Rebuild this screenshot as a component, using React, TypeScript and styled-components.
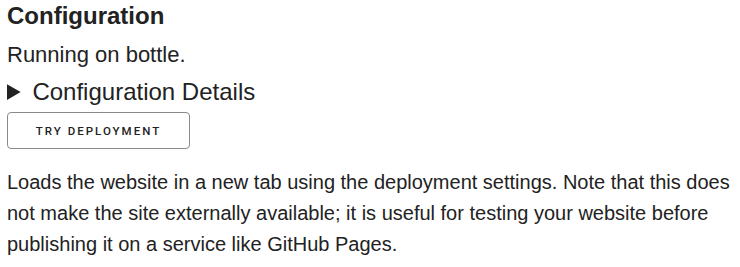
import styled, { createGlobalStyle } from "styled-components";

const GlobalStyle = createGlobalStyle`
  body {
    margin: 0;
    background: #fff;
    color: #222;
    font-family: "Liberation Sans", Arial, sans-serif;
  }
`;

const Panel = styled.section`
  padding: 2px 7px 0;
`;

const Heading = styled.h2`
  margin: 0;
  font-size: 24px;
  line-height: 28px;
  font-weight: 700;
`;

const Status = styled.p`
  margin: 12px 0 0;
  font-size: 22px;
  line-height: 26px;
`;

const Details = styled.details`
  margin-top: 10px;
  font-size: 24px;
  line-height: 28px;
`;

const Summary = styled.summary`
  cursor: pointer;
`;

const Button = styled.button`
  display: block;
  margin-top: 6px;
  width: 183px;
  height: 37px;
  padding: 0;
  background: #fff;
  border: 1px solid #8a8a8a;
  border-radius: 4px;
  color: #222;
  font-family: Roboto, "Liberation Sans", sans-serif;
  font-size: 11.5px;
  font-weight: 500;
  letter-spacing: 2px;
  text-transform: uppercase;
  cursor: pointer;
`;

const Description = styled.p`
  margin: 18px 0 0;
  font-size: 20px;
  line-height: 31px;
`;

export default function App() {
  return (
    <>
      <GlobalStyle />
      <Panel>
        <Heading>Configuration</Heading>
        <Status>Running on bottle.</Status>
        <Details>
          <Summary>Configuration Details</Summary>
        </Details>
        <Button type="button">Try deployment</Button>
        <Description>
          Loads the website in a new tab using the deployment settings. Note that this does
          not make the site externally available; it is useful for testing your website before
          publishing it on a service like GitHub Pages.
        </Description>
      </Panel>
    </>
  );
}
